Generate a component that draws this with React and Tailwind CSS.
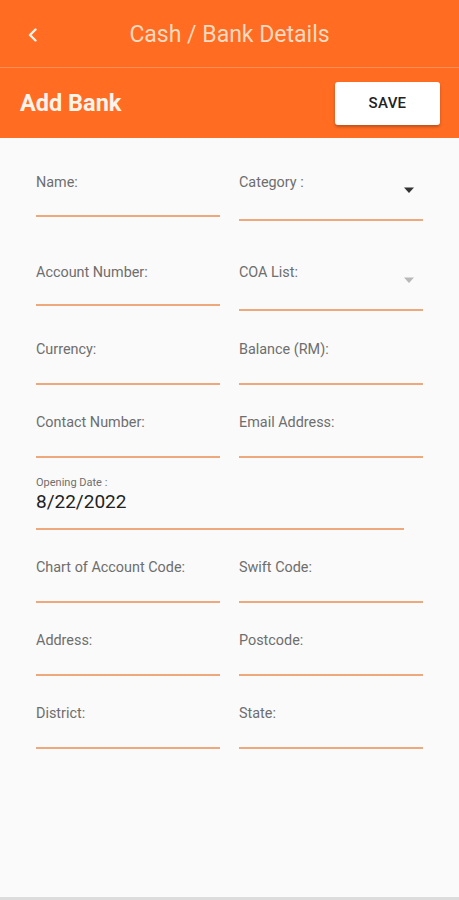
import React from "react";

function Caret({ faded }) {
  return (
    <svg width="12" height="7" viewBox="0 0 12 7" className={faded ? "text-[#b8b8b8]" : "text-[#333]"}>
      <path d="M1 0.5h10L6 6z" fill="currentColor" />
    </svg>
  );
}

function Field({ label, select, faded, lineClass = "mt-[25px]" }) {
  return (
    <div className="flex-1 min-w-0">
      <div className="flex items-start justify-between">
        <span className="text-[14.4px] leading-[16px] text-[#6e6e6e]">{label}</span>
        {select && (
          <span className="mt-[12px] mr-[8px]">
            <Caret faded={faded} />
          </span>
        )}
      </div>
      <div className={`h-[2px] bg-[#eda97c] ${lineClass}`} />
    </div>
  );
}

export default function App() {
  return (
    <div className="w-[459px] h-[900px] bg-[#fafafa] flex flex-col font-['Roboto',sans-serif] overflow-hidden">
      {/* top app bar */}
      <header className="bg-[#ff6c22] h-[67px] relative flex items-center justify-center">
        <button className="absolute left-[27px] top-[28px]">
          <svg width="12" height="14" viewBox="0 0 12 14">
            <path d="M8.5 1.5L3 7l5.5 5.5" stroke="#fff3ea" strokeWidth="2.4" fill="none" strokeLinecap="round" strokeLinejoin="round" />
          </svg>
        </button>
        <h1 className="text-[23px] text-[#fcd9bf] mt-[4px]">Cash / Bank Details</h1>
      </header>
      <div className="h-px bg-[#ff8d55]" />
      <div className="bg-[#ff6c22] h-[70px] flex items-center justify-between pl-[20px] pr-[19px]">
        <h2 className="text-[23.5px] font-bold text-[#fff4ec] mt-[1px]">Add Bank</h2>
        <button className="w-[105px] h-[43px] bg-white rounded-[3px] shadow-[0_2px_3px_rgba(0,0,0,0.25)] text-[15px] font-medium text-[#222] tracking-[0.3px] mt-[1px]">
          SAVE
        </button>
      </div>

      <main className="flex-1 px-[36px] pt-[37px] flex flex-col">
        <div className="flex gap-[19px]">
          <Field label="Name:" lineClass="mt-[24px]" />
          <Field label="Category :" select lineClass="mt-[25px]" />
        </div>
        <div className="flex gap-[19px] mt-[44px] items-start">
          <Field label="Account Number:" lineClass="mt-[23px]" />
          <Field label="COA List:" select faded lineClass="mt-[25px]" />
        </div>
        <div className="flex gap-[19px] mt-[31px]">
          <Field label="Currency:" />
          <Field label="Balance (RM):" />
        </div>
        <div className="flex gap-[19px] mt-[30px]">
          <Field label="Contact Number:" />
          <Field label="Email Address:" />
        </div>

        <div className="mt-[19px] w-[368px]">
          <div className="text-[11px] leading-[11px] text-[#6e6e6e]">Opening Date :</div>
          <div className="text-[19px] leading-[22px] text-[#222] mt-[3px]">8/22/2022</div>
          <div className="h-[2px] bg-[#eda97c] mt-[15px]" />
        </div>

        <div className="flex gap-[19px] mt-[30px]">
          <Field label="Chart of Account Code:" />
          <Field label="Swift Code:" />
        </div>
        <div className="flex gap-[19px] mt-[30px]">
          <Field label="Address:" />
          <Field label="Postcode:" />
        </div>
        <div className="flex gap-[19px] mt-[30px]">
          <Field label="District:" />
          <Field label="State:" />
        </div>
      </main>
      <div className="h-[3px] bg-[#dcdcdc]" />
    </div>
  );
}
